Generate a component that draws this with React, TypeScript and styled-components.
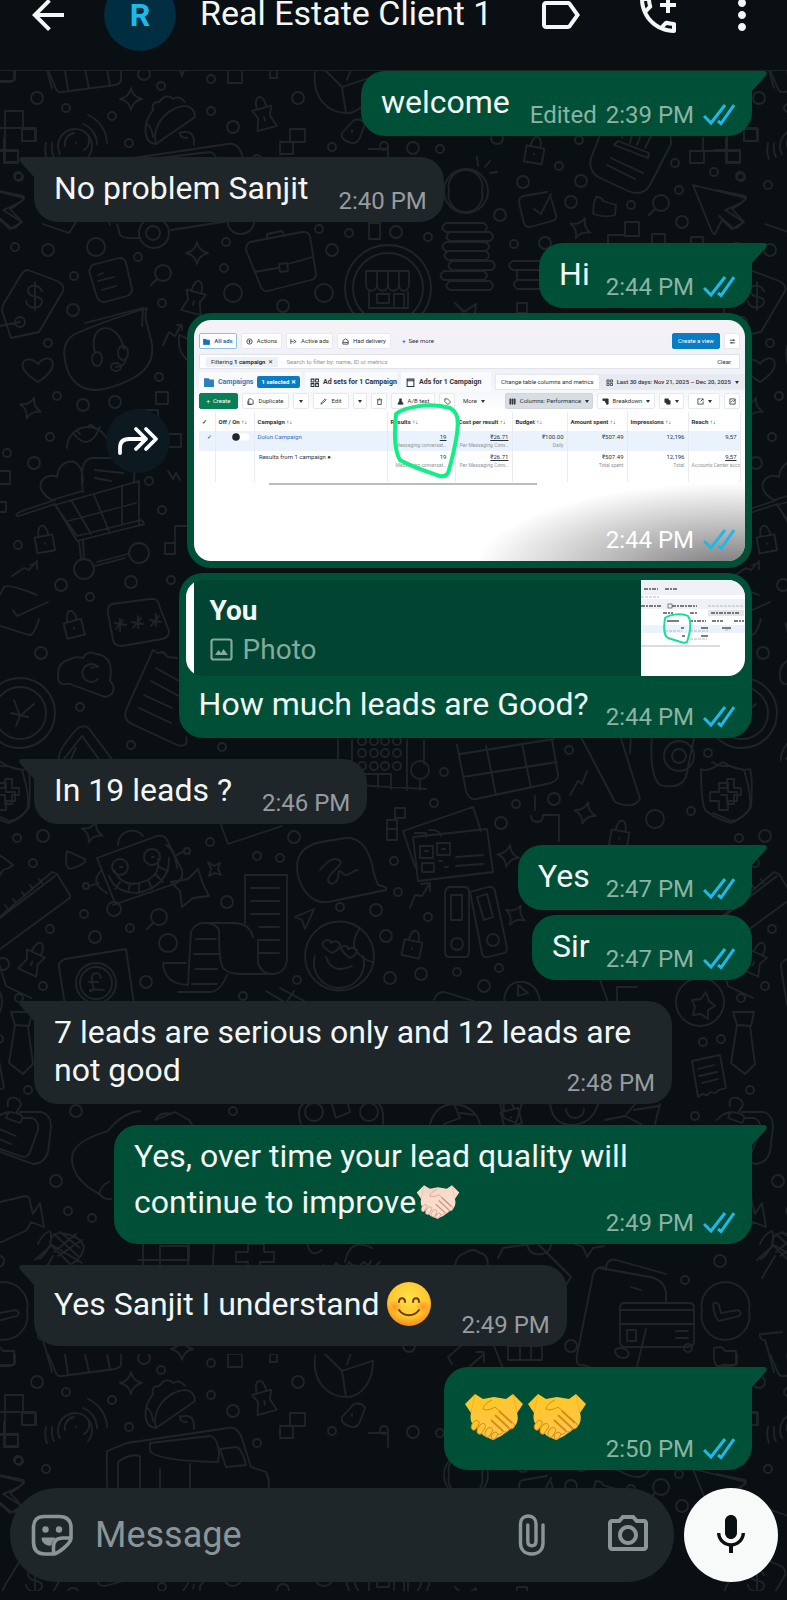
import React from 'react';
import styled, { createGlobalStyle, css } from 'styled-components';
import {
  MdArrowBack,
  MdLabelOutline,
  MdOutlineAddIcCall,
  MdMoreVert,
  MdOutlinePhotoCamera,
  MdMic,
} from 'react-icons/md';

const color = {
  base: '#0a0f13',
  line: '#1c2226',
  doodle: '#1e2428',
  sent: '#005038',
  quote: '#004431',
  received: '#1e2629',
  text: '#f3f7f6',
  sentMeta: '#8cb3a4',
  receivedMeta: '#969c9f',
  muted: '#8b9598',
  tick: '#20b8e8',
};

const GlobalStyle = createGlobalStyle`
  * { box-sizing: border-box; }
  body {
    margin: 0;
    background: ${color.base};
    color: ${color.text};
    font-family: Roboto, 'Liberation Sans', sans-serif;
  }
  button { font: inherit; color: inherit; border: 0; padding: 0; background: none; cursor: pointer; }
`;

/* ---------- Page frame ---------- */

const Page = styled.div`
  display: flex;
  flex-direction: column;
  min-height: 100vh;
`;

const Header = styled.header`
  height: 71px;
  overflow: hidden;
  border-bottom: 1px solid ${color.line};
`;

const HeaderRow = styled.div`
  display: flex;
  align-items: center;
  height: 72px;
  margin-top: -21px;
  padding: 0 21px 0 24px;
`;

const IconButton = styled.button`
  display: grid;
  place-items: center;
  flex: none;
  width: 48px;
  height: 48px;
`;

const Avatar = styled.div`
  display: grid;
  place-items: center;
  flex: none;
  width: 72px;
  height: 72px;
  margin-left: 32px;
  border-radius: 50%;
  background: #002d40;
  color: #1fb8ee;
  font-size: 32px;
  line-height: 32px;
  font-weight: 700;
`;

const Title = styled.h1`
  flex: 1;
  min-width: 0;
  margin: 0 0 0 24px;
  padding-bottom: 4px;
  font-size: 34px;
  line-height: 30px;
  font-weight: 400;
  white-space: nowrap;
`;

const HeaderActions = styled.div`
  display: flex;
  gap: 50px;
`;

const DotsButton = styled(IconButton)`
  margin-left: -14px;
`;

const Chat = styled.main`
  position: relative;
  display: flex;
  flex: 1;
  flex-direction: column;
  overflow: hidden;
`;

const WallpaperSvg = styled.svg`
  position: absolute;
  inset: 0;
  width: 100%;
  height: 100%;
`;

const NavStrip = styled.footer`
  height: 9px;
`;

/* ---------- Messages ---------- */

const Messages = styled.ol`
  position: relative;
  display: flex;
  flex: 1;
  flex-direction: column;
  gap: 5px;
  margin: 0;
  padding: 0 35px 0 34px;
  list-style: none;
`;

const Row = styled.li<{ $sent?: boolean; $first?: boolean }>`
  display: flex;
  align-items: center;
  justify-content: ${(p) => (p.$sent ? 'flex-end' : 'flex-start')};
  gap: 17px;
  &:not(:first-child) {
    margin-top: ${(p) => (p.$first ? 16 : 0)}px;
  }
`;

const BubbleBox = styled.div<{ $sent?: boolean; $tail?: boolean; $wrap?: boolean }>`
  position: relative;
  display: grid;
  grid-template-columns: ${(p) => (p.$wrap ? '1fr' : 'auto auto')};
  column-gap: ${(p) => (p.$sent ? 16 : 30)}px;
  align-items: end;
  max-width: 638px;
  padding: 0 17px 0 20px;
  border-radius: 24px;
  background: ${(p) => (p.$sent ? color.sent : color.received)};
  ${(p) =>
    p.$tail &&
    (p.$sent
      ? css`
          border-top-right-radius: 0;
        `
      : css`
          border-top-left-radius: 0;
        `)}
`;

const TailSvg = styled.svg<{ $sent?: boolean }>`
  position: absolute;
  top: 0;
  ${(p) => (p.$sent ? 'right: -15px;' : 'left: -15px; transform: scaleX(-1);')}
`;

const Body = styled.p`
  grid-area: 1 / 1;
  margin: 0;
  padding: 12px 0 15px;
  font-size: 32px;
  line-height: 38px;
`;

const Meta = styled.span<{ $sent?: boolean; $wrap?: boolean }>`
  display: flex;
  align-items: center;
  justify-self: end;
  grid-area: ${(p) => (p.$wrap ? '1 / 1' : '1 / 2')};
  gap: 9px;
  padding-bottom: 7px;
  color: ${(p) => (p.$sent ? color.sentMeta : color.receivedMeta)};
  font-size: 24px;
  line-height: 28px;
  white-space: nowrap;
`;

const EditedMark = styled.span`
  padding-left: 4px;
`;

const InlineEmoji = styled.svg`
  width: 44px;
  height: 44px;
  margin: 5px 0;
  vertical-align: -16px;
`;

const BigEmojis = styled.div`
  display: flex;
  gap: 3px;
  padding: 20px 3px 23px 0;
`;

const ForwardButton = styled.button`
  display: grid;
  place-items: center;
  width: 64px;
  height: 64px;
  border-radius: 50%;
  background: #0c1920;
`;

/* ---------- Quoted reply ---------- */

const ReplyBox = styled.div`
  padding: 7px 7px 0;
  border-radius: 24px;
  background: ${color.sent};
`;

const Quote = styled.div`
  display: flex;
  height: 96px;
  overflow: hidden;
  border-radius: 17px;
  background: linear-gradient(90deg, #fff 8px, ${color.quote} 8px);
`;

const QuoteText = styled.div`
  flex: 1;
  padding: 11px 16px 0 24px;
  font-size: 28px;
  line-height: 39px;
`;

const QuoteAuthor = styled.strong`
  display: block;
  font-weight: 700;
`;

const QuoteKind = styled.span`
  display: flex;
  align-items: center;
  gap: 10px;
  color: #84aa9b;
`;

const ReplyLine = styled.div`
  display: grid;
  grid-template-columns: auto auto;
  column-gap: 17px;
  align-items: end;
  padding: 0 10px 0 13px;
`;

const ReplyBody = styled(Body)`
  padding-top: 9px;
`;

/* ---------- Photo message ---------- */

const PhotoBox = styled.figure`
  width: 565px;
  margin: 0;
  padding: 7px;
  border-radius: 24px;
  background: ${color.sent};
`;

const Photo = styled.div`
  position: relative;
  height: 241px;
  overflow: hidden;
  padding: 13px 5px 0;
  border-radius: 17px;
  background: linear-gradient(#f5f1f7 0, #eef2f8 60px, #fff 92px);
  color: #2b3338;
  font-size: 6px;
  line-height: 10px;
  white-space: nowrap;
`;

const Shade = styled.div`
  position: absolute;
  inset: 0;
  background: radial-gradient(ellipse 260px 88px at 98% 104%, rgba(70, 70, 70, 0.75), rgba(110, 110, 110, 0.5) 45%, transparent);
`;

const PhotoMeta = styled(Meta)`
  position: absolute;
  right: 10px;
  bottom: 0;
  color: #fff;
`;

const Scribble = styled.svg`
  position: absolute;
  top: 80px;
  left: 194px;
`;

const AdBar = styled.div<{ $gap?: number }>`
  display: flex;
  align-items: center;
  gap: ${(p) => p.$gap ?? 4}px;
`;

const AdTool = styled.span<{ $tone?: 'blue' | 'green' | 'outline' | 'grey' | 'plain'; $w?: number }>`
  display: flex;
  flex: none;
  align-items: center;
  justify-content: center;
  gap: 4px;
  width: ${(p) => (p.$w ? `${p.$w}px` : 'auto')};
  height: 16px;
  border: 1px solid ${(p) => (p.$tone === 'outline' ? '#8cc0e4' : '#e6e9ee')};
  border-radius: 2px;
  background: #fff;
  ${(p) => p.$tone === 'plain' && 'background: none; border-color: transparent;'}
  ${(p) => p.$tone === 'outline' && 'color: #1672b8; font-weight: 700;'}
  ${(p) => p.$tone === 'blue' && 'background: #0a7cc4; border-color: #0a7cc4; color: #fff;'}
  ${(p) => p.$tone === 'green' && 'background: #087f56; border-color: #087f56; color: #fff;'}
  ${(p) => p.$tone === 'grey' && 'background: #d8dde3; border-color: #d0d6dc;'}
`;

const AdSpacer = styled.span`
  flex: 1;
`;

const FilterBar = styled(AdBar)`
  height: 15px;
  margin-top: 5px;
  padding: 0 8px 0 6px;
  border: 1px solid #e0e4e9;
  background: #fff;
`;

const FilterChip = styled.span`
  padding: 0 5px;
  background: #eef0f3;
`;

const Hint = styled.span`
  color: #8e959b;
`;

const LevelBar = styled(AdBar)`
  height: 20px;
  margin-top: 3px;
  font-size: 7px;
  font-weight: 700;
`;

const LevelTab = styled.span<{ $w: number; $active?: boolean }>`
  display: flex;
  flex: none;
  align-items: center;
  gap: 4px;
  width: ${(p) => p.$w}px;
  height: 20px;
  padding-left: 5px;
  background: #f9fafc;
  color: ${(p) => (p.$active ? '#2a80bd' : '#2b3338')};
`;

const SelectedTag = styled.span`
  padding: 0 4px;
  border-radius: 2px;
  background: #0a7cc4;
  color: #fff;
  font-size: 6px;
  line-height: 12px;
`;

const ColumnTip = styled.span`
  height: 16px;
  padding: 2px 5px;
  margin-left: auto;
  border: 1px solid #e4e7eb;
  background: #fff;
  font-size: 6px;
  font-weight: 400;
`;

const DateRange = styled.span`
  display: flex;
  align-items: center;
  gap: 4px;
  height: 16px;
  padding: 0 6px;
  margin-left: -4px;
  background: #e7ebf1;
  font-size: 6px;
  font-weight: 500;
`;

const ToolBar = styled(AdBar)`
  margin-top: 1px;
`;

const AdTable = styled.table`
  width: 541px;
  margin-top: 3px;
  border-collapse: collapse;
  table-layout: fixed;
  th,
  td {
    overflow: hidden;
    padding: 2px 3px;
    border-right: 1px solid #e8ebef;
    line-height: 8px;
    text-align: right;
    vertical-align: top;
  }
  th {
    height: 19px;
    text-align: left;
    vertical-align: middle;
    font-weight: 700;
    white-space: normal;
  }
  td {
    height: 31px;
  }
  tr[data-picked] td {
    height: 20px;
    background: #eaf3fd;
  }
  td:nth-child(3) {
    text-align: left;
  }
  td:nth-child(4) {
    padding-right: 8px;
  }
  small {
    display: block;
    color: #8e959b;
    font-size: 5px;
  }
`;

const Campaign = styled.a`
  color: #2f6fc4;
  text-decoration: none;
`;

const ScrollThumb = styled.div`
  width: 268px;
  height: 2px;
  margin: 1px 0 0 70px;
  background: #b9bcbf;
`;

/* ---------- Composer ---------- */

const Composer = styled.form`
  position: relative;
  display: flex;
  gap: 10px;
  padding: 18px 9px 9px 10px;
`;

const Field = styled.div`
  display: flex;
  flex: 1;
  align-items: center;
  min-width: 0;
  height: 94px;
  padding: 0 22px 0 18px;
  border-radius: 47px;
  background: ${color.received};
  color: ${color.muted};
`;

const MessageInput = styled.input`
  flex: 1;
  min-width: 0;
  margin: 0 20px 0 19px;
  padding: 0;
  border: 0;
  outline: 0;
  background: none;
  color: ${color.text};
  font: 36px/42px Roboto, 'Liberation Sans', sans-serif;
  &::placeholder {
    color: ${color.muted};
    opacity: 1;
  }
`;

const AttachGroup = styled.div`
  display: flex;
  gap: 48px;
`;

const MicButton = styled.button`
  display: grid;
  place-items: center;
  flex: none;
  width: 94px;
  height: 94px;
  border-radius: 50%;
  background: #f8f9f9;
  color: #0a0f13;
`;

/* ---------- Icons ---------- */

const Ticks = () => (
  <svg width="32" height="22" viewBox="0 0 32 22" fill="none" stroke={color.tick} strokeWidth="3" role="img" aria-label="Read">
    <path d="M1 12l7 7L22 1M15 17l3 2.500L31 1" />
  </svg>
);

const Tail = ({ sent }: { sent?: boolean }) => (
  <TailSvg $sent={sent} width="16" height="22" viewBox="0 0 16 22" aria-hidden="true">
    <path d="M0 0h13c3 0 3.500 2.500 2 4.500L1 20v2H0z" fill={sent ? color.sent : color.received} />
  </TailSvg>
);

const StickerIcon = () => (
  <svg width="42" height="42" viewBox="0 0 42 42" fill="none" stroke="currentColor" strokeWidth="3.600">
    <path d="M40 24V14C40 6 36 2.500 28 2.500H14C6 2.500 2.500 6 2.500 14v14c0 8 3.500 12 11.500 12h8.500C26 40 40 30 40 24zM22.500 39v-6c0-6 3.500-9 9.500-9h7" />
    <path d="M11 24h13c-3 3-4 5-4 7-4 1-9-2-9-7z" fill="currentColor" strokeWidth="1" />
    <circle cx="14.500" cy="15.500" r="3.200" fill="currentColor" stroke="none" />
    <circle cx="28" cy="15.500" r="3.200" fill="currentColor" stroke="none" />
  </svg>
);

const ClipIcon = () => (
  <svg width="28" height="42" viewBox="0 0 28 42" fill="none" stroke="currentColor" strokeWidth="3.400" strokeLinecap="round">
    <path d="M25 11v18c0 7-4.500 11-11.300 11S2.500 36 2.500 29V10c0-5 3-8 7.700-8S18 5 18 10v17c0 3-1.500 4.800-4.200 4.800S9.800 30 9.800 27V11" />
  </svg>
);

const ForwardIcon = () => (
  <svg width="42" height="30" viewBox="0 0 42 30" fill="none" stroke="#fff" strokeWidth="3.800" strokeLinejoin="round" strokeLinecap="round">
    <path d="M3 27v-5c0-6 3-9 9-9h16M19 3l10 10-10 10M29 3l10 10-10 10" />
  </svg>
);

const PictureIcon = () => (
  <svg width="23" height="23" viewBox="0 0 23 23" fill="none" stroke="currentColor" strokeWidth="2.200">
    <rect x="1.500" y="1.500" width="20" height="20" rx="2" />
    <path d="M5 17l3.500-5 2.500 3 2.500-4 4.500 6z" fill="currentColor" stroke="none" />
  </svg>
);

const Handshake = ({ id, tones, inline }: { id: string; tones: [string, string, string]; inline?: boolean }) => {
  const art = (
    <>
      <defs>
        <linearGradient id={id} x1="0" y1="0" x2="0.300" y2="1">
          <stop offset="0" stopColor={tones[0]} />
          <stop offset="1" stopColor={tones[1]} />
        </linearGradient>
      </defs>
      <g fill={`url(#${id})`} stroke={tones[2]} strokeWidth="1" strokeLinejoin="round">
        <path d="M1 17L11 7l8 5 11-2 12 2 7-5 10 10-6 9c2 6 0 13-5 15L37 49l-8 4-9-4-8-8C6 36 6 30 7 26z" stroke="none" />
        <path d="M28 13c-5 2-9 6-9 9 3 2 9 0 12-2l19 17c2 4-3 6-5 4 0 4-4 5-6 3-1 4-5 4-7 2-1 3-5 3-7 1" />
        <path d="M9 36c2-4 7-3 6 1l-4 6c-4 1-5-4-2-7zM16 38c3-3 7-1 5 3l-4 6c-4 1-6-3-1-9zM23 42c3-3 7-1 5 3l-3 5c-4 1-6-3-2-8zM29 46c3-2 6 0 4 3l-2 3c-4 1-5-2-2-6z" />
        <path d="M31 28l14 13M27 33l12 11M35 24l13 12" fill="none" strokeWidth="1.800" />
        <path d="M11 7l-4 19M49 7l4 19" fill="none" opacity="0.350" />
      </g>
    </>
  );
  return inline ? (
    <InlineEmoji viewBox="0 0 60 60" role="img" aria-label="Handshake">
      {art}
    </InlineEmoji>
  ) : (
    <svg width="60" height="60" viewBox="0 0 60 60" role="img" aria-label="Handshake">
      {art}
    </svg>
  );
};

const SmileFace = () => (
  <InlineEmoji viewBox="0 0 44 44" role="img" aria-label="Smiling face">
    <defs>
      <radialGradient id="face" cx="0.500" cy="0.350" r="0.650">
        <stop offset="0" stopColor="#ffe04a" />
        <stop offset="0.700" stopColor="#fdc52b" />
        <stop offset="1" stopColor="#f28c1c" />
      </radialGradient>
      <radialGradient id="cheek">
        <stop offset="0" stopColor="#ff7a1f" stopOpacity="0.650" />
        <stop offset="1" stopColor="#ff7a1f" stopOpacity="0" />
      </radialGradient>
    </defs>
    <circle cx="22" cy="22" r="22" fill="url(#face)" />
    <circle cx="8" cy="25" r="7" fill="url(#cheek)" />
    <circle cx="36" cy="25" r="7" fill="url(#cheek)" />
    <path d="M12 20c0-5 6-5 6 0M26 20c0-5 6-5 6 0M12 28c5 7 15 7 20 0" fill="none" stroke="#6b3a0a" strokeWidth="2" strokeLinecap="round" />
  </InlineEmoji>
);

/* ---------- Wallpaper ---------- */

const SMALL_DOTS =
  '66,108 112,116 161,86 211,79 211,111 129,143 332,147 440,149 19,177 15,247 138,257 74,276 224,268 226,242 319,229 349,233 428,237 162,303 579,140 559,166 514,244 631,205 679,190 675,163 714,172 48,343 57,396 159,377 50,437 7,453 149,481 162,510 18,545 90,597 171,580 80,707 131,745 222,747 17,838 33,863 210,842 257,856 280,858 84,914 130,928 50,929 43,986 19,998 243,996 340,907 297,980 428,917 398,892 394,861 434,803 444,772 569,750 708,753 516,804 691,811 457,972 499,968 233,1111 68,1211 92,1218 703,1042 721,1039 28,1090 695,1116 685,1280 688,1348 18,1460 46,1469 257,1443 384,1430';
const LARGE_DOTS =
  '37,98 144,74 233,127 298,98 413,148 48,250 332,250 396,232 283,306 73,310 497,138 523,182 581,181 571,202 500,215 545,243 682,222 83,405 115,402 34,463 61,585 131,582 41,653 43,836 294,837 95,937 227,902 3,964 146,982 376,910 386,936 390,978 421,974 484,986 501,823 554,799 76,1111 56,1181 720,1261 571,1346 409,1346';
const HUGE_DOTS = '96,247 233,293 324,293 168,943 655,819';

const dots = (list: string, r: number) =>
  list.split(' ').map((pair) => {
    const [cx, cy] = pair.split(',').map(Number);
    return <circle key={pair} cx={cx} cy={cy} r={r} />;
  });

const place = (href: string, list: number[][]) =>
  list.map(([x, y, turn = 0]) => <use key={`${href}${x},${y}`} href={href} transform={`translate(${x} ${y}) rotate(${turn})`} />);

const STORE = 'M366 271h43v13c0 9-10 9-10 0 0 9-11 9-11 0 0 9-11 9-11 0 0 9-11 9-11 0zM377 271v13M388 271v13M399 271v13M369 292v16h39v-16M377 294h12v9h-12zM394 308v-14h10v14';

const DOODLES = [
  // shopping basket, pixel blocks, dish and taco
  'M48 70l8 19q2 4 6 3l53-7q6-1 6-6V70M65 70l3 21M85 70l4 18M107 70l3 15M0 81h12q3 0 3-3v-8',
  'M228 70h14v13h-14zM270 70h7v8h-7z',
  'M5 111h18v17H5zM-8 128h30v13h13v-13H23M5 128v34h13v-12H-8',
  'M60 154a17 17 0 1 1 28 3M65 146a11 11 0 0 1 9-13M87 134a11 11 0 0 1-3 16M76 143v.500M83 124a22 22 0 0 1 14 20M88 115a32 32 0 0 1 19 28M52 143q-1 9 2 14M46 143q-2 9 1 16',
  'M156 144c-8-30 38-52 39-27l-39 27c-13-1-14-20-3-34q-2-8 6-8l5-5q6-2 9 2 6-4 12 3M147 124q5 3 6 13M180 133q15-5 14 12M180 132q-1 6 7 6',
  'M315 72c-3 25 12 42 34 41 12-2 24-14 24-36M325 70l17 17 4 26M342 87l30-10M347 80l6-16',
  'M354 120q8-2 11 4l-4 11q-3 9-9 8-12-3-10-10zM352 130v2M290 129h15v13h-15zM280 142h13v12h-13zM369 149h19v14',
  // delivery van
  'M110 225q-4-12-3-58l20-8 101-15q11-2 15 14l8 25 15 5q6 11 0 29l-13 3M117 224l3 11q3 4 20 3M171 230l58-9M118 178q12-9 22-6v40q-14 2-22 6zM150 167v-8l60-7q8 2 9 18l-1 8q-60-1-68-11zM160 185v30M190 180v28M220 165l16-2q6 1 10 18l-20 2z',
  'M139 233a15 15 0 1 0 30 0 15 15 0 1 0-30 0M146 233a7 7 0 1 0 14 0 7 7 0 1 0-14 0M227 220q2 14 14 14 12-1 14-14',
  'M-5 190l28 6q4 3-13 13l11 12q-5 9-10 7l-14-12M43 224l26 9 7-11',
  // briefcase, note, money tag and shop badge
  'M250 242l52-10q6-1 8 4l6 38q0 5-5 6l-43 11q-5 1-7-4l-15-37q0-6 4-8zM267 239v-5l15-3 3 5M254 272l24-4M288 264l25-7M279 264l8-1 1 8-8 1z',
  'M92 265l27-7q6 0 7 5l6 26q0 5-5 7l-22 6q-6 0-8-5l-8-26zM98 275l5-2M98 281l16-4M102 290l14-4',
  'M28 270l29 11q8 4 6 10l-24 41-28 6L2 311q0-5 2-8l17-28q3-5 7-5zM42 291c-4-8-15-6-14 0 1 8 15 4 14 11-1 8-15 7-16-1M35 282v28M0 326l20-4M15 322a5 5 0 1 0 10 0 5 5 0 1 0-10 0',
  'M85 323l58-15-1 18',
  'M345 288a43 43 0 1 0 86 0 43 43 0 1 0-86 0M353 288a35 35 0 1 0 70 0 35 35 0 1 0-70 0',
  STORE,
  'M369 223h11v16h-11z',
  // bulb, coin stacks and contract
  'M444 191a22 22 0 1 0 44 0 22 22 0 1 0-44 0M449 191a17 17 0 1 0 33 0 17 17 0 1 0-33 0M478 166l-1-9M485 167l5-6M490 173l7-1',
  'M446 223h38q6 5 0 9h-38q-7-4 0-9zM450 232h40q6 5 0 9h-40q-7-4 0-9zM446 242h40q6 5 0 9h-40q-7-4 0-9zM448 251h38q6 5 0 9h-38q-7-4 0-9zM452 261h40q6 5 0 9h-40q-7-4 0-9zM444 271h40q6 5 0 9h-40q-7-4 0-9zM450 281h40q6 5 0 9h-40q-7-4 0-9z',
  'M545 261h-32q-8 4 0 9h32M545 270h-28v10h28M545 280h-28q-6 4 0 9h28',
  'M455 303l9 9 12-8-1 10M517 303h10v10h-10z',
  'M606 120l-15 38q-3 12 7 19l30 14q15 6 22-6l21-41-1-20M618 141l31 12-1 5-34-13zM611 158l32 15M607 165l28 14M622 138l4-13M630 143l4-15M637 145l5-14M645 148l6-12',
  'M523 196l24-4M551 198l5 17q1 5-4 6l-22 6q-5 0-6-4l-5-20q0-6 4-7M534 209l7 5 10-20M594 203l2-6q6 0 7 4l13 4-1 10q-10 3-22-1zM693 185l53 13q1 3-21 12l19 12-12 7-10-9-7 14q-2 0-3-2z',
  'M625 222h14v14h-14zM608 243v-8h17M652 243v-9h13v9M691 243v-6h12v6M690 151h14v12h-14zM690 151h50M726 151h14v12h-14zM703 138v13M726 138v13M744 129h14v12h-14z',
  // headset bubble, heart, cart
  'M147 308q-3 9 0 16l5 20c3 22-12 34-40 43q-30 10-43-13-12-30 6-40 20-9 50-19zM95 353c-8-31 23-34 29-4M92 359a5 7 0 1 0 10 0 5 7 0 1 0-10 0M118 353a5 7 0 1 0 10 0 5 7 0 1 0-10 0M126 358q0 8-10 9M111 367a5 4 0 1 0 10 0 5 4 0 1 0-10 0',
  'M38 382c-29-17-10-30 0-18 11-14 27 1 0 18zM163 345l6-13 6 4 6-11M177 325h5v5M199 353q-8-15-20-18v8q0 10 9 18',
  'M67 448a21 21 0 1 1 42 0M74 434q15 19 26-7M77 431l3 3M88 427q2-4 6 0M82 491l-30 9c-22-12-8-29 5-23 1-18 26-25 26 5M83 492q-5-34 10-34h42l-1 25M95 470l28 3M95 478l16 3',
  'M55 500l-33 11q-10 5-3 5l36-12 22 37 64-16q6 0 0-5l-64 16-22-31 84-24v44M71 500l20 34M94 495l15 36M122 486v38M68 521l68-18M79 541l2 18M83 541l1 18M97 562l31-8M95 566l30-8M74 569a10 10 0 1 0 20 0 10 10 0 1 0-20 0M129 553a10 10 0 1 0 20 0 10 10 0 1 0-20 0',
  'M138 410h20v13M156 392h12v12h-12zM168 434h13v13h-13zM165 543h10v11h-10zM175 543v-17h13M168 471l5 8 3-6 4 7M0 471h10v13H0M0 502h6v10H0M12 576l12-8 5 2 8-9M30 565l7-2v6',
  // checklist, password, cloud, receipt and coins
  'M-5 604l9-17q3-4 33 8M13 610l4 6 31-14M39 619q-5 17-10 16l-38-12M112 604l38-5q8-1 9 6l10 26q0 7-7 8l-40 7q-8 0-9-6l-5-27q-1-7 4-9zM115 623l11 2M120 619v12M116 629l7-9M132 622l11 2M138 616v12M133 628l8-10M150 620l11 2M156 614v12M151 626l8-10',
  'M71 659q-14 3-13 17c0 12 10 7 12 8l35 13c12-2 9-13 5-16 3-17-2-26-14-27q-9-4-13 4-7-2-12 1zM98 667a9 9 0 1 0 0 12M91 668l7-2',
  'M153 650l-27 60q-3 10 6 14l45 21q12 3 9-8M153 650l5 3 5-1 5 5 9 1M156 668l23 13M151 681l28 15M144 695l28 13M139 708l32 15',
  'M-15 713a35 35 0 1 1 70 0 35 35 0 1 1-70 0M-6 713a26 26 0 1 1 52 0 26 26 0 1 1-52 0M14 700l6 16 14-12M20 716l-4 10M11 713l17 4',
  'M59 760q-2-10 19-32 8-4 12 2l30 40M64 759l18-23 22 30M76 748l-8 17',
  // shield, building, calendar
  'M-10 762q8 5 18 4l14 4q9 30 5 40-7 10-18 11l-18-8M-1 788h6v-9h7v9h7v7h-7v9H5v-9h-6',
  'M338 740v44l88 5M352 740v44M424 740v24M407 740v50M363 785v-11h28v15M378 774v14M420 780v10M411 770a9 9 0 1 0 18 0 9 9 0 1 0-18 0',
  'M457 745l9 46q3 9 10 8l75-16q8-3 7-9l-6-34M460 754l94-15M463 777l94-15M486 746l10 49M522 744l9 44',
  'M573 722l42 80q18 8 25-3l-22-70q1-12 14-12l-2 36M652 735q-3 40 8 50 20 5 26-8l9-44M664 756a15 15 0 1 0 30 0 15 15 0 1 0-30 0M672 756a7 7 0 1 0 14 0 7 7 0 1 0-14 0',
  'M723 762q-16 11-22 7 0 36 5 42 10 8 25 12 14-6 20-16 2-30-1-38-12 3-27-7zM719 783h9v9h9v9h-9v9h-9v-9h-9v-9h9zM570 795l8-14 4 3 5-13',
  // robot, star, magnifier, ruler
  'M97 858l60-22q8-2 11 6l14 28q2 9-5 13l-64 22M97 858l18 45M118 845c0-16 20-18 25-9M166 845q9 5 11 23M184 851a3 3 0 1 0 6 0 3 3 0 1 0-6 0M177 855l7-4M101 871q-12 12 6 22M83 886a3 3 0 1 0 6 0 3 3 0 1 0-6 0M89 886l10-3M107 909a7 7 0 1 0 14 0 7 7 0 1 0-14 0',
  'M112 867a8 8 0 1 0 16 0 8 8 0 1 0-16 0M144 857a8 8 0 1 0 16 0 8 8 0 1 0-16 0M109 876q6 17 29 17 32-8 31-35M114 870q8 17 26 13 21-6 18-24M120 882l-5 7M130 884l-2 8M139 883v9M148 880l4 9M155 874l8 8M159 867l9 4M120 867h2M152 857h2',
  'M171 882l17-3 10-10 5 15 6 12-16 2-11 9-2-16zM67 851l18 8q2 5-15 10-6-2-3-18zM208 862l6 4 6-3-2 6 3 6-6-2-6 3 2-7z',
  'M-4 920l56-48 5 2 13 21q1 3-3 5L-4 952M55 876L0 918M5 905l3 4M13 899l3 4M22 892l3 4M30 885l3 4M39 879l3 4M-5 852l13 9 5 4-4 3-6 2-6 10',
  // bank note, scroll, ledger
  'M65 1005l-6-38q-1-5 6-8l61-10 8 55M76 983a20 20 0 1 0 40 0 20 20 0 1 0-40 0M80 983a16 16 0 1 0 32 0 16 16 0 1 0-32 0M101 978q-1-7-8-4-3 5 1 15-5 4-4 1 5-1 14 0M89 982h9',
  'M188 985q2-38 3-53 4-10 16-9h28q15 1 18 14M188 985q-24-1-25-22h23M178 992h32q10 0 17-17M219 930q-3-6-12-7M219 930q0 31 4 38 5 6 18 6h32q13-1 14-15v-84h-42v48M258 940v23q3 11 16 11M196 939h20M194 954h25M195 969h22M192 984h25M251 888h28M251 901h28M251 914h28M259 927h20M259 940h20M259 953h20',
  'M221 825l7 19 54-18M346 838q22-1 28 36l4 11q10 2 8 5l-53 11c-25 7-36-20-36-34 0-18 14-23 24-25zM320 870q14-17 21-8c0 6-22 17-9 22 13-4 0-20 13-9 4 1 8-5 13-5M295 917l19-8-9 20-3-9zM410 908l5-13 7 1 8-13M421 884l9-1v8',
  // QR cards and binders
  'M415 867l-12-36 70-24 8 24M413 837l74-8 6 43-75 9zM420 846h13v12h-13zM437 843h13v12h-13zM422 863h12v9h-12zM439 861h3M445 867h3M456 857l27-2M456 866l27-2M415 833h11v4M429 830q10-1 12 6M425 851h3M442 849h3',
  'M445 892q1-5 5-5h15q4 0 4 5v60q0 5-4 5h-15q-5 0-5-5zM451 895h11v25h-11zM451 944a6 6 0 1 0 12 0 6 6 0 1 0-12 0M470 892l18-5q6-1 7 4l12 57q0 4-3 5l-16 4q-5 1-6-4zM477 897l10-3 6 23-9 3zM487 940a6 6 0 1 0 12 0 6 6 0 1 0-12 0M387 820h10v20h-10zM387 829h10M395 818v-10h10v10z',
  'M305 956a34 34 0 1 0 69 0 34 34 0 1 0-69 0M315 956a25 25 0 1 0 48 0M332 953q-16-10-5-13 4 0 4 3 6-4 9 1 0 6-8 9zM350 958q-13-10-7-12 5-1 5 3 6-3 9 1 0 5-7 8zM326 957q6 18 26 9M360 928q-11 16-2 25 5 6 14 9',
  'M535 810v-14M531 816a6 6 0 1 0 12 0M543 815h16v26M720 960l8 26 25 12M266 991l20 12 8-12M280 988l26 14M434 1000q2-8 10-8l30 9M504 1002q1-22 20-20 14 3 16 20M518 985l10 8-10 3z',
  // medal, tie, receipt, pin board
  'M676 1002a24 24 0 1 0 48 0 24 24 0 1 0-48 0M692 1000l9-1 5-7 3 9 6 5-7 4v9l-7-5-8 1 2-8zM617 1002v-15h20M600 980l8 22',
  'M733 1012h21l-3 14-14-1zM737 1025l-6 38 14 11 10-10-5-38M692 1061l28-6 6 33-7 2-4 3-4-1-4 3-5-1-4 3zM698 1069l16-4M699 1076l18-4M702 1083l16-4',
  'M8 1106q-2-10 8-8 8 5 3 10l-3 5q10 2 4 10l-14-5q2-8 8-5M20 1112h22q9 3 9 15l-3 25q-4 12-15 12l-35-13M22 1118h10q7 2 6 12l-8 22q-3 7-10 4L-3 1148M-3 1128l19 8M-5 1137l16 7M-5 1120q6-7 14-8',
  // helmet, ball, reel, network
  'M140 1111q-18 2-32 20-37 11-36 28 0 15 16 28l11 7q3-10 10-12M99 1193a11 11 0 0 0 12 6M155 1120l20-8 14 8 5 8M155 1120q6-9 16-6M301 1124q-7-20 10-24h60q14 2 12 24M305 1112a9 9 0 1 0 18 0 9 9 0 1 0-18 0M360 1112a9 9 0 1 0 18 0 9 9 0 1 0-18 0M332 1104l4 14 14-6-2-8',
  'M430 1124q6-20 24-20 21 2 26 20M454 1104l6 14-16 6M460 1113l16 2M500 1103l4 15 12 5 6-20M550 1104q3 20 20 21 22 0 28-21M566 1109a9 9 0 0 0 18 0M605 1120l20-4 10-12M625 1116l16 8M634 1110l24-4M660 1104l-5 20',
  // camcorder, corn, sweets
  'M0 1202l25-6q5 0 5 6l3 12 7-11 4 24-13-5-4 8-25 12q-5 0-6-8M38 1244q4-10 12-13 2 3 0 14-5 11-11 14M50 1245q0-15 16-11 15 3 18 13-2 11-12 17M54 1234l24 22M60 1232l20 16M50 1244l20 20M82 1240l-24 16M76 1234l-22 18M35 1260l17-15 30 18M40 1278l13-22',
  'M143 1244v32M160 1246h29v14h-51M160 1246v28M188 1274v-32M214 1244l-2 36M248 1244h16v8h10v10h-14v14h-12v-14h-12v-10h12zM307 1240q2 20 15 10M345 1262q5-25 27-14M355 1265a10 10 0 0 0 16-4M323 1265l8 6 5-8 8 7 5-8 7 7 8-7 8 7 8-7M455 1265q2-10 10-12 8-6 15 0 8 1 8 13M498 1258l5-10 34-5 34 34-9 14-20-8M527 1244q2 12 16 10 9-3 8-12M575 1244l8 3 4 10 6-9 11-2M606 1270q0-12 10-10l50 14',
  // wallet card, clock
  'M606 1268q-12-4-14 12l-15 75q-2 12 7 10l36 15q12 3 15-5l11-46M600 1268l50 9q14 3 16 15v11M624 1303q-4 0-4 5v33q0 5 4 6h64q6-1 6-6v-33q0-5-5-5zM620 1310h73M620 1324h73M627 1330h9v11h-9zM676 1331h12M676 1338h12M631 1287l10 3M615 1350q4-4 12 0 4 6-2 8-10 0-10-8',
  'M702 1311a24 24 0 1 0 47 0 24 24 0 1 0-47 0M713 1304q3-3 6 1l2 8 17-3q5 3 1 6l-20 5q-5-4-6-17M714 1348l6-1q3 0 5 4h11v12q-2 4-9 3h-10q-4-3-3-18zM762 1334l20-2M765 1340l9 32M760 1334q-1 6 5 6M452 1364l-4-7 20-17 22-4 12 30M470 1366l13-11M476 1352h8v10M508 1346h12v14h-12zM520 1346h22v14h-22M531 1346v14M512 1340h12',
];

const Wallpaper = () => (
  <WallpaperSvg aria-hidden="true">
    <defs>
      <path id="sparkle" d="M0-12q2 9 11 11-9 2-11 11-2-9-11-11 9-2 11-11z" />
      <path id="lock" d="M-9-3H9v16H-9zM-5-3c0-14 10-14 10 0M0 4v1" />
      <path id="lens" d="M-8 0a8 8 0 1 0 16 0 8 8 0 1 0-16 0M-6 6l-6 6" />
      <path id="peg" d="M-10-5H10L6 4l4 12H-10L-6 4zM-5-6c0-14 10-14 10 0M0 4v4" />
      <g id="doodles">
        {dots(SMALL_DOTS, 4)}
        {dots(LARGE_DOTS, 6)}
        {dots(HUGE_DOTS, 9)}
        {place('#sparkle', [[131, 100], [197, 254], [30, 409, 20], [580, 229, 25], [92, 833, 20], [508, 857, 10], [585, 814, 15], [515, 916, 30], [182, 1350]])}
        {place('#lock', [[535, 150, 10], [44, 539, -10], [73, 624, -14], [413, 944, 12], [620, 834, 10], [510, 1113, -15]])}
        {place('#lens', [[163, 273], [661, 203], [159, 917]])}
        {place('#peg', [[263, 113, -15], [195, 297, 15], [34, 958, 25]])}
        {dots('362,741 374,741 385,741 397,741 362,753 374,753 385,753 397,753 362,766 374,766 385,766 397,766', 4)}
        {DOODLES.map((d, i) => (
          <path key={i} d={d} />
        ))}
      </g>
      <pattern id="wallpaper" width="722" height="1284" patternUnits="userSpaceOnUse" patternTransform="translate(0 -1)">
        <g fill="none" stroke={color.doodle} strokeWidth="1.800" strokeLinecap="round" strokeLinejoin="round">
          {[-722, 0, 722].map((x) =>
            [-1354, -70].map((y) => <use key={`${x}${y}`} href="#doodles" x={x} y={y} />),
          )}
        </g>
      </pattern>
    </defs>
    <rect width="100%" height="100%" fill="url(#wallpaper)" />
  </WallpaperSvg>
);

/* ---------- Ads report photo ---------- */

const Caret = () => (
  <svg width="4" height="3" viewBox="0 0 4 3" aria-hidden="true">
    <path d="M0 0h4L2 3z" fill="#2b3338" />
  </svg>
);

const Glyph = ({ d, fill = 'none', size = 7 }: { d: string; fill?: string; size?: number }) => (
  <svg width={size} height={size} viewBox="0 0 8 8" fill={fill} stroke="currentColor" strokeWidth="0.900" aria-hidden="true">
    <path d={d} />
  </svg>
);

const FOLDER = 'M0.500 1.500h3l1 1h3v5h-7z';
const SHEET = 'M1 1h6v6.500H1zM1 2.500h6';
const GRID = 'M1 1h2.500v2.500H1zM5 1h2.500v2.500H5zM1 5h2.500v2.500H1zM5 5h2.500v2.500H5z';

const COLUMNS: [string, number][] = [
  ['✓', 16],
  ['Off / On ↑↓', 39],
  ['Campaign ↑↓', 133],
  ['Results ↑↓', 68],
  ['Cost per result ↑↓', 57],
  ['Budget ↑↓', 55],
  ['Amount spent ↑↓', 60],
  ['Impressions ↑↓', 61],
  ['Reach ↑↓', 52],
];

const AdsReport = () => (
  <Photo>
    <AdBar>
      <AdTool $tone="outline" $w={38}><Glyph d={FOLDER} fill="currentColor" />All ads</AdTool>
      <AdTool $w={41}><Glyph d="M1 4a3 3 0 1 1 6 0 3 3 0 0 1-6 0M4 6V2.500M2.500 4L4 2.500 5.500 4" />Actions</AdTool>
      <AdTool $w={47}><Glyph d="M1 1v6M1 4h3M4 2l3 2-3 2" />Active ads</AdTool>
      <AdTool $w={54}><Glyph d="M1 7V3l3-2 3 2v4zM1 5h6" />Had delivery</AdTool>
      <AdTool $tone="plain" $w={46}>+&nbsp; See more</AdTool>
      <AdSpacer />
      <AdTool $tone="blue" $w={48}>Create a view</AdTool>
      <AdTool $w={16}><Glyph d="M1 2.500h6M1 5.500h6M5 1.500v2M3 4.500v2" /></AdTool>
    </AdBar>
    <FilterBar $gap={8}>
      <FilterChip>Filtering <b>1 campaign</b> &nbsp;✕</FilterChip>
      <Hint>Search to filter by: name, ID or metrics</Hint>
      <AdSpacer />
      <span>Clear</span>
    </FilterBar>
    <LevelBar>
      <LevelTab $w={102} $active>
        <Glyph d={FOLDER} fill="currentColor" size={10} />Campaigns<SelectedTag>1 selected ✕</SelectedTag>
      </LevelTab>
      <LevelTab $w={92}><Glyph d={GRID} size={9} />Ad sets for 1 Campaign</LevelTab>
      <LevelTab $w={90}><Glyph d={SHEET} size={9} />Ads for 1 Campaign</LevelTab>
      <ColumnTip>Change table columns and metrics</ColumnTip>
      <DateRange><Glyph d={GRID} />Last 30 days: Nov 21, 2025 – Dec 20, 2025<Caret /></DateRange>
    </LevelBar>
    <ToolBar>
      <AdTool $tone="green" $w={39}>+ &nbsp;Create</AdTool>
      <AdTool $w={47}><Glyph d="M2 1h3l2 2v4H2zM1 3v4.500h4" />Duplicate</AdTool>
      <AdTool $w={16}><Caret /></AdTool>
      <AdTool $w={36}><Glyph d="M1 7l1-2 4-4 1 1-4 4z" />Edit</AdTool>
      <AdTool $w={14}><Caret /></AdTool>
      <AdTool $w={16}><Glyph d="M1 2h6M2 2v5.500h4V2M3 1h2" /></AdTool>
      <AdTool $w={44}><Glyph d="M3 1v2L1 7h6L5 3V1z" fill="currentColor" />A/B test</AdTool>
      <AdTool $w={16}><Glyph d="M1 1h3l3.500 3.500-3 3L1 4z" /></AdTool>
      <AdTool $tone="plain" $w={30}>More<Caret /></AdTool>
      <AdSpacer />
      <AdTool $tone="grey" $w={88}><Glyph d="M1 1h1v6H1zM3.500 1h1v6h-1zM6 1h1v6H6z" fill="currentColor" />Columns: Performance<Caret /></AdTool>
      <AdTool $w={58}><Glyph d="M1 1h6v2H1zM4 3h3v2H4zM5 5h2v2H5z" fill="currentColor" />Breakdown<Caret /></AdTool>
      <AdTool $w={25}><Glyph d="M1 1h4v4H1zM3 3h4v4H3z" fill="currentColor" /><Caret /></AdTool>
      <AdTool $w={32}><Glyph d="M4 1H1v6h6V4M4 4l3-3M5 1h2v2" /><Caret /></AdTool>
      <AdTool $w={16}><Glyph d="M1 1h6v6H1zM2 5l2-2 1 1 2-2" /></AdTool>
    </ToolBar>
    <AdTable>
      <colgroup>
        {COLUMNS.map(([name, width]) => (
          <col key={name} width={width} />
        ))}
      </colgroup>
      <thead>
        <tr>
          {COLUMNS.map(([name]) => (
            <th key={name} scope="col">{name}</th>
          ))}
        </tr>
      </thead>
      <tbody>
        <tr data-picked="">
          <td>✓</td>
          <td><svg width="20" height="8" viewBox="0 0 20 8"><rect x="4" y="0.500" width="14" height="7" rx="3.500" fill="#fff" /><circle cx="5" cy="4" r="3.800" fill="#20262a" /></svg></td>
          <td><Campaign href="#campaign">Dolon Campaign</Campaign></td>
          <td><u>19</u><small>Messaging conversat…</small></td>
          <td><u>₹26.71</u><small>Per Messaging Conv…</small></td>
          <td>₹100.00<small>Daily</small></td>
          <td>₹507.49</td>
          <td>12,196</td>
          <td>9,57</td>
        </tr>
        <tr>
          <td />
          <td />
          <td>&nbsp;Results from 1 campaign ●</td>
          <td>19<small>Messaging conversat…</small></td>
          <td><u>₹26.71</u><small>Per Messaging Conv…</small></td>
          <td />
          <td>₹507.49<small>Total spent</small></td>
          <td>12,196<small>Total</small></td>
          <td><u>9,57</u><small>Accounts Center acco</small></td>
        </tr>
      </tbody>
    </AdTable>
    <ScrollThumb />
    <Scribble width="74" height="84" viewBox="0 0 74 84" fill="none" stroke="#12ee86" strokeWidth="4" strokeLinejoin="round" strokeLinecap="round" aria-hidden="true">
      <path d="M8 14c8-7 34-12 54-6 6 3 8 10 8 16-1 18-6 34-9 46-1 5-4 7-9 6-18-6-28-9-40-16C6 50 6 34 8 15" />
    </Scribble>
    <Shade />
    <PhotoMeta $sent>
      <time>2:44 PM</time>
      <Ticks />
    </PhotoMeta>
  </Photo>
);

const ReportThumb = () => (
  <svg width="104" height="96" viewBox="0 0 104 96" role="img" aria-label="Ads report preview">
    <path fill="#fff" d="M0 0h104v96H0z" />
    <path fill="#f0f1f6" d="M0 0h104v15H0zM0 19h104v10H0z" />
    <path fill="#eaf3fd" d="M0 45h104v8H0z" />
    <path fill="#e2e6e9" d="M67 30h36v6H67z" />
    <path stroke="#50565b" strokeWidth="1.600" strokeDasharray="4 1 2 1" d="M3 9h14M24 9h13M0 26h20M31 26h25M22 33h10M49 33h8M70 33h28M48 41h17M71 41h11M93 41h10" />
    <path stroke="#b2b7bb" strokeWidth="1" strokeDasharray="3 1" d="M0 17h18M67 26h36M24 51h17M49 51h18M49 59h17M84 50h5" />
    <path stroke="#50565b" strokeWidth="1.300" d="M26 41h12M40 48h3M60 48h7M81 48h9M60 56h7M41 56h3" />
    <path stroke="#b9bcbf" strokeWidth="1.200" d="M0 66h79" />
    <rect x="27" y="24" width="4" height="4" fill="none" stroke="#50565b" strokeWidth="0.700" />
    <path d="M24 38c5-4 18-5 23-2 4 6 2 17-1 26l-3 1-16-5c-5-3-4-12-3-20z" fill="none" stroke="#12e09a" strokeWidth="2" />
  </svg>
);

/* ---------- Message kinds ---------- */

interface BubbleProps {
  time: string;
  sent?: boolean;
  first?: boolean;
  wrap?: boolean;
  edited?: boolean;
  children: React.ReactNode;
}

const Bubble = ({ time, sent, first, wrap, edited, children }: BubbleProps) => (
  <Row $sent={sent} $first={first}>
    <BubbleBox $sent={sent} $tail={first} $wrap={wrap}>
      {first && <Tail sent={sent} />}
      {children}
      <Meta $sent={sent} $wrap={wrap}>
        {edited && <EditedMark>Edited</EditedMark>}
        <time>{time}</time>
        {sent && <Ticks />}
      </Meta>
    </BubbleBox>
  </Row>
);

const GOLD: [string, string, string] = ['#ffc81e', '#fcc550', '#d98a12'];
const PALE: [string, string, string] = ['#f6d5c4', '#fbe2d2', '#c99a86'];

export default function App() {
  return (
    <>
      <GlobalStyle />
      <Page>
        <Header>
          <HeaderRow>
            <IconButton aria-label="Back"><MdArrowBack size={48} /></IconButton>
            <Avatar>R</Avatar>
            <Title>Real Estate Client 1</Title>
            <HeaderActions>
              <IconButton aria-label="Label chat"><MdLabelOutline size={48} /></IconButton>
              <IconButton aria-label="Call"><MdOutlineAddIcCall size={48} /></IconButton>
              <DotsButton aria-label="More options"><MdMoreVert size={48} /></DotsButton>
            </HeaderActions>
          </HeaderRow>
        </Header>
        <Chat>
          <Wallpaper />
          <Messages>
            <Bubble sent first edited time="2:39 PM"><Body>welcome</Body></Bubble>
            <Bubble first time="2:40 PM"><Body>No problem Sanjit</Body></Bubble>
            <Bubble sent first time="2:44 PM"><Body>Hi</Body></Bubble>
            <Row $sent>
              <ForwardButton aria-label="Forward photo"><ForwardIcon /></ForwardButton>
              <PhotoBox><AdsReport /></PhotoBox>
            </Row>
            <Row $sent>
              <ReplyBox>
                <Quote>
                  <QuoteText>
                    <QuoteAuthor>You</QuoteAuthor>
                    <QuoteKind><PictureIcon />Photo</QuoteKind>
                  </QuoteText>
                  <ReportThumb />
                </Quote>
                <ReplyLine>
                  <ReplyBody>How much leads are Good?</ReplyBody>
                  <Meta $sent><time>2:44 PM</time><Ticks /></Meta>
                </ReplyLine>
              </ReplyBox>
            </Row>
            <Bubble first time="2:46 PM"><Body>In 19 leads ?</Body></Bubble>
            <Bubble sent first time="2:47 PM"><Body>Yes</Body></Bubble>
            <Bubble sent time="2:47 PM"><Body>Sir</Body></Bubble>
            <Bubble first wrap time="2:48 PM"><Body>7 leads are serious only and 12 leads are not good</Body></Bubble>
            <Bubble sent first wrap time="2:49 PM">
              <Body>Yes, over time your lead quality will continue to improve<Handshake id="pale" tones={PALE} inline /></Body>
            </Bubble>
            <Bubble first time="2:49 PM"><Body>Yes Sanjit I understand <SmileFace /></Body></Bubble>
            <Bubble sent first time="2:50 PM">
              <BigEmojis>
                <Handshake id="goldLeft" tones={GOLD} />
                <Handshake id="goldRight" tones={GOLD} />
              </BigEmojis>
            </Bubble>
          </Messages>
          <Composer onSubmit={(event) => event.preventDefault()}>
            <Field>
              <IconButton type="button" aria-label="Stickers"><StickerIcon /></IconButton>
              <MessageInput aria-label="Message" placeholder="Message" />
              <AttachGroup>
                <IconButton type="button" aria-label="Attach"><ClipIcon /></IconButton>
                <IconButton type="button" aria-label="Camera"><MdOutlinePhotoCamera size={48} /></IconButton>
              </AttachGroup>
            </Field>
            <MicButton type="button" aria-label="Record voice message"><MdMic size={48} /></MicButton>
          </Composer>
        </Chat>
        <NavStrip />
      </Page>
    </>
  );
}
